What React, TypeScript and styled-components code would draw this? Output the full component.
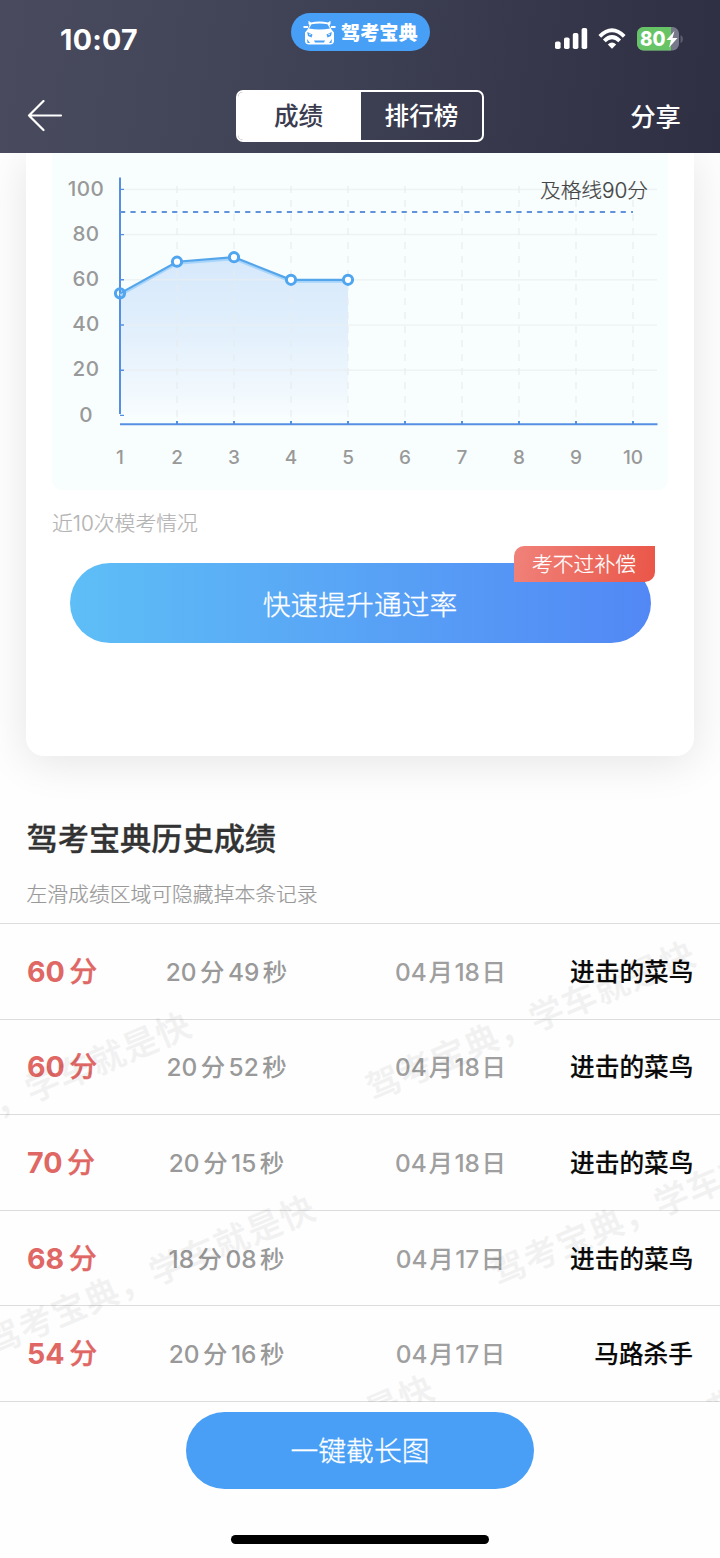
import React from "react";
import styled, { createGlobalStyle } from "styled-components";

const GlobalStyle = createGlobalStyle`
  * { box-sizing: border-box; }
  body {
    margin: 0;
    background: #fefefe;
    font-family: Inter, "Noto Sans CJK SC", sans-serif;
    color: #333;
  }
  button { font: inherit; border: 0; padding: 0; background: none; color: inherit; }
`;

const Screen = styled.div`
  width: 720px;
  height: 1558px;
  display: flex;
  flex-direction: column;
  overflow: hidden;
  background: #fefefe;
`;

const Header = styled.header`
  height: 153px;
  flex: none;
  position: relative;
  z-index: 2;
  color: #fff;
  background: linear-gradient(98deg, #494a5d 0%, #414457 35%, #37384b 70%, #2f2f43 100%);
`;

const StatusBar = styled.div`
  height: 78px;
  padding: 0 36px 0 60px;
  display: grid;
  grid-template-columns: 230.5px 139px 1fr;
  align-items: center;
`;

const Clock = styled.time`
  font-size: 28.6px;
  font-weight: 700;
  line-height: 32px;
  padding-top: 1px;
  letter-spacing: 0.3px;
`;

const BrandPill = styled.div`
  width: 139px;
  height: 38px;
  margin-top: -14px;
  padding: 1px 11px 0 12.5px;
  border-radius: 19px;
  background: #479ff6;
  display: flex;
  align-items: center;
  gap: 5px;
  font-size: 19.2px;
  font-weight: 900;
  line-height: 38px;
  white-space: nowrap;

  svg { flex: none; }
`;

const StatusIcons = styled.div`
  display: flex;
  justify-content: flex-end;
  align-items: center;
`;

const NavBar = styled.nav`
  height: 75px;
  padding: 1px 39px 0 27px;
  display: grid;
  grid-template-columns: 209px 248px 1fr;
  align-items: center;
`;

const BackButton = styled.button`
  width: 52px;
  height: 40px;
  display: flex;
  align-items: center;
`;

const Tabs = styled.div`
  width: 248px;
  height: 52px;
  border: 2px solid #fff;
  border-radius: 7px;
  display: flex;
  overflow: hidden;
`;

const Tab = styled.button<{ $active?: boolean }>`
  flex: 1;
  font-size: 24.6px;
  font-weight: 500;
  line-height: 48px;
  padding-right: ${(p) => (p.$active ? "2px" : "0")};
  color: ${(p) => (p.$active ? "#3b3c50" : "#fff")};
  background: ${(p) => (p.$active ? "#fff" : "transparent")};
`;

const ShareButton = styled.button`
  justify-self: end;
  padding-top: 1px;
  font-size: 25.4px;
  font-weight: 500;
  line-height: 34px;
`;

const Card = styled.section`
  height: 603px;
  flex: none;
  margin: 0 26px;
  padding: 0 26px;
  border-radius: 0 0 18px 18px;
  background: #fff;
  box-shadow: 0 6px 44px rgba(0, 0, 0, 0.105);
`;

const ChartPanel = styled.div`
  height: 337px;
  border-radius: 0 0 10px 10px;
  background: #f8fefe;
  overflow: hidden;

  svg { display: block; }
`;

const ChartCaption = styled.p`
  margin: 18px 0 0;
  font-size: 20.8px;
  font-weight: 300;
  -webkit-text-stroke: 0.2px currentColor;
  line-height: 32px;
  color: #b3b3b3;
`;

const BoostWrap = styled.div`
  position: relative;
  margin: 23px 17px 0 17.5px;
`;

const BoostButton = styled.button`
  display: block;
  width: 581px;
  height: 80px;
  padding-top: 2px;
  border-radius: 40px;
  background: linear-gradient(90deg, #5ebef6, #5288f5);
  color: #fff;
  font-size: 27.8px;
  font-weight: 300;
  -webkit-text-stroke: 0.3px currentColor;
  line-height: 80px;
`;

const Badge = styled.span`
  position: absolute;
  top: -17px;
  right: -3.5px;
  width: 141px;
  height: 36px;
  padding-top: 1px;
  border-radius: 10px 0 10px 0;
  background: linear-gradient(100deg, #f0827a, #ea5648);
  color: #fff;
  font-size: 20.8px;
  font-weight: 300;
  -webkit-text-stroke: 0.25px currentColor;
  line-height: 35px;
  text-align: center;
`;

const HistoryHead = styled.div`
  height: 167px;
  flex: none;
  padding: 60px 26.5px 0;
`;

const HistoryTitle = styled.h2`
  margin: 0;
  font-size: 31.2px;
  font-weight: 500;
  -webkit-text-stroke: 0.3px currentColor;
  line-height: 46px;
  color: #333;
`;

const HistoryHint = styled.p`
  margin: 17px 0 0;
  font-size: 20.8px;
  font-weight: 300;
  -webkit-text-stroke: 0.2px currentColor;
  line-height: 32px;
  color: #999;
`;

const HistoryList = styled.ul`
  position: relative;
  flex: none;
  margin: 0;
  padding: 0;
  list-style: none;
  overflow: hidden;
  border-top: 1px solid #dcdcdc;
`;

const HistoryRow = styled.li`
  height: 95.6px;
  padding: 1px 27px 0;
  display: grid;
  grid-template-columns: 100px 199px 5px 239px 1fr;
  align-items: center;
  border-bottom: 1px solid #dcdcdc;
  white-space: nowrap;
  line-height: 40px;
`;

const Score = styled.span`
  display: flex;
  align-items: center;
  gap: 4.5px;
  font-size: 28.6px;
  font-weight: 700;
  color: #df6764;
`;

const ScoreUnit = styled.span`
  font-weight: 500;
  font-size: 28px;
  -webkit-text-stroke: 0.3px currentColor;
`;

const Duration = styled.span`
  display: flex;
  justify-content: center;
  align-items: center;
  gap: 3.5px;
  font-size: 24.4px;
  font-weight: 500;
  color: #999;
`;

const ExamDate = styled.span`
  grid-column: 4;
  display: flex;
  justify-content: center;
  gap: 1.6px;
  font-size: 24.4px;
  font-weight: 500;
  color: #9f9f9f;
`;

const Rank = styled.span`
  justify-self: end;
  font-size: 24.7px;
  font-weight: 500;
  -webkit-text-stroke: 0.15px currentColor;
  color: #0a0a0a;
`;

const Watermark = styled.span<{ $x: number; $y: number }>`
  position: absolute;
  left: ${(p) => p.$x}px;
  top: ${(p) => p.$y}px;
  transform: translate(-50%, -50%) rotate(-23deg);
  font-size: 34px;
  font-weight: 500;
  -webkit-text-stroke: 0.4px currentColor;
  letter-spacing: 1.4px;
  line-height: 40px;
  white-space: nowrap;
  color: #000;
  opacity: 0.048;
  pointer-events: none;
`;

const Footer = styled.footer`
  flex: 1;
  padding-top: 10px;
  display: flex;
  flex-direction: column;
  align-items: center;
`;

const CaptureButton = styled.button`
  width: 348px;
  height: 77px;
  padding-top: 2px;
  border-radius: 39px;
  background: #499ff6;
  color: #fff;
  font-size: 27.8px;
  font-weight: 300;
  -webkit-text-stroke: 0.3px currentColor;
  line-height: 75px;
`;

const HomeIndicator = styled.div`
  width: 258px;
  height: 9px;
  margin-top: 46px;
  border-radius: 5px;
  background: #000;
`;

const CarIcon = () => (
  <svg width="33" height="25" viewBox="0 0 33 25" fill="none">
    <path d="M5.500 0.800 8 2.400Q16.500 .6 25 2.400L27.500.800V4L26.500 5.500 28.500 9.500 31 12.500V21.500Q30.500 24.500 27 24.500H6Q2.500 24.500 2 21.500V12.500L4.500 9.500 6.500 5.500 5.500 4Z" fill="#fff" />
    <path d="M.5 7H5M28 7H32.500" stroke="#fff" strokeWidth="1.800" />
    <path d="M8.500 4.300Q16.500 2.500 24.500 4.300L27 8.500Q22 9.500 16.500 9.500T6 8.500Z" fill="#479ff6" />
    <path d="M4.200 12 9.500 14.500 8.500 17.500 5 16ZM28.800 12 23.500 14.500 24.500 17.500 28 16ZM11 20.500H22L21 22.500H12ZM4 19 7 23H4.500ZM29 19 26 23H28.500Z" fill="#479ff6" />
    <path d="M6.300 14.300H7.600M25.400 14.300H26.700" stroke="#fff" strokeWidth="1.200" />
  </svg>
);

const SignalIcon = () => (
  <svg width="33" height="22" viewBox="0 0 33 22" fill="#fff">
    <rect x="0" y="13.500" width="5.600" height="7.500" rx="1.800" />
    <rect x="9" y="9.500" width="5.600" height="11.500" rx="1.800" />
    <rect x="17.800" y="5" width="5.600" height="16" rx="1.800" />
    <rect x="26.600" y="0" width="5.600" height="21" rx="1.800" />
  </svg>
);

const WifiIcon = () => (
  <svg width="28" height="22" viewBox="0 0 28 22" fill="none" stroke="#fff" strokeWidth="3.900">
    <path d="M1.800 8.300Q14-3.700 26.200 8.300" />
    <path d="M6.300 12.900Q14 5.300 21.700 12.900" />
    <path d="M14 20.800 9.800 16.500Q14 12.500 18.200 16.500Z" fill="#fff" stroke="none" />
  </svg>
);

const BatteryIcon = () => (
  <svg width="47" height="24" viewBox="0 0 47 24">
    <defs>
      <clipPath id="batteryBody"><rect width="42" height="23.500" rx="6.500" /></clipPath>
    </defs>
    <g clipPath="url(#batteryBody)">
      <rect width="42" height="24" fill="#77788a" />
      <rect width="34" height="24" fill="#66c466" />
    </g>
    <path d="M43.500 8Q46 9 46 12T43.500 16Z" fill="#5c5d6f" />
    <text x="3" y="19" fontFamily="Inter" fontSize="20.500" fontWeight="800" fill="#fff" textLength="25.5" lengthAdjust="spacingAndGlyphs">80</text>
    <path d="M37.500 4 29.500 13H34L32 20.500 40.500 11H35.500Z" fill="#fff" />
  </svg>
);

const StatusSpacer = styled.span<{ $w: number }>`
  width: ${(p) => p.$w}px;
`;

const BackIcon = () => (
  <svg width="36" height="32" viewBox="0 0 36 32" fill="none" stroke="#fff" strokeWidth="2.200" strokeLinecap="round" strokeLinejoin="round">
    <path d="M34 15.500H2M16.500 1 2 15.500 16.500 30" />
  </svg>
);

const attempts = [54, 68, 70, 60, 60];
const xAt = (n: number) => 120 + (n - 1) * 57;
const yAt = (score: number) => 415.4 - score * 2.26;
const linePoints = attempts.map((s, i) => `${xAt(i + 1)},${yAt(s)}`).join(" ");
const runs = Array.from({ length: 10 }, (_, i) => i + 1);
const levels = [100, 80, 60, 40, 20, 0];

const ScoreChart = () => (
  <svg width="616" height="337" viewBox="52 153 616 337" fontFamily="Inter, 'Noto Sans CJK SC', sans-serif">
    <defs>
      <linearGradient id="area" x1="0" y1="0" x2="0" y2="1">
        <stop offset="0" stopColor="#d5e8fb" />
        <stop offset="0.5" stopColor="#e3f0fc" />
        <stop offset="1" stopColor="#f7fcfe" />
      </linearGradient>
    </defs>
    <polygon points={`120,415 ${linePoints} 348,415`} fill="url(#area)" />
    {levels.slice(0, 5).map((v) => (
      <line key={v} x1="120" x2="657" y1={yAt(v)} y2={yAt(v)} stroke="#e9eeef" strokeOpacity=".7" strokeWidth="1.500" />
    ))}
    {runs.slice(1).map((n) => (
      <line key={n} x1={xAt(n)} x2={xAt(n)} y1="186" y2="421" stroke="#e6ebed" strokeOpacity=".75" strokeWidth="1.500" strokeDasharray="7 7" />
    ))}
    <g stroke="#568fe2" strokeWidth="2">
      <line x1="120" x2="120" y1="177.500" y2="414" />
      <line x1="120" x2="657.500" y1="424.300" y2="424.300" />
      {levels.map((v) => (
        <line key={v} x1="120" x2="124" y1={yAt(v)} y2={yAt(v)} strokeWidth="1.400" />
      ))}
      {runs.slice(1).map((n) => (
        <line key={n} x1={xAt(n)} x2={xAt(n)} y1="421" y2="425" />
      ))}
      <line x1="120" x2="633" y1="212" y2="212" stroke="#6093dc" strokeDasharray="5.200 5.230" />
    </g>
    <polyline points={linePoints} transform="translate(0 1.5)" fill="none" stroke="#a7d4fa" strokeWidth="3" />
    <polyline points={linePoints} fill="none" stroke="#55a5ea" strokeWidth="2.200" />
    {attempts.map((s, i) => (
      <circle key={i} cx={xAt(i + 1)} cy={yAt(s)} r="4.600" fill={i === 0 ? "none" : "#fff"} stroke="#4fa5ef" strokeWidth="3" />
    ))}
    <g fill="#999" fontSize="20.600" fontWeight="500" letterSpacing=".4" textAnchor="middle">
      {levels.map((v) => (
        <text key={v} x="86" y={yAt(v) + 6.2}>{v}</text>
      ))}
    </g>
    <g fill="#999" fontSize="19" fontWeight="500" textAnchor="middle">
      {runs.map((n) => (
        <text key={n} x={xAt(n)} y="464">{n}</text>
      ))}
    </g>
    <text x="540" y="198" fontSize="20.800" fontWeight="300" fill="#444" stroke="#444" strokeWidth=".2" textLength="108">及格线90分</text>
  </svg>
);

const records = [
  { score: 60, min: "20", sec: "49", month: "04", day: "18", rank: "进击的菜鸟" },
  { score: 60, min: "20", sec: "52", month: "04", day: "18", rank: "进击的菜鸟" },
  { score: 70, min: "20", sec: "15", month: "04", day: "18", rank: "进击的菜鸟" },
  { score: 68, min: "18", sec: "08", month: "04", day: "17", rank: "进击的菜鸟" },
  { score: 54, min: "20", sec: "16", month: "04", day: "17", rank: "马路杀手" },
];

const watermarks = [
  [531, 97],
  [27, 168],
  [656, 282],
  [151, 351],
  [772, 462],
  [270, 531],
];

export default function App() {
  return (
    <>
      <GlobalStyle />
      <Screen>
        <Header>
          <StatusBar>
            <Clock>10:07</Clock>
            <BrandPill>
              <CarIcon />
              驾考宝典
            </BrandPill>
            <StatusIcons>
              <SignalIcon />
              <StatusSpacer $w={10} />
              <WifiIcon />
              <StatusSpacer $w={11} />
              <BatteryIcon />
            </StatusIcons>
          </StatusBar>
          <NavBar>
            <BackButton aria-label="返回"><BackIcon /></BackButton>
            <Tabs>
              <Tab $active>成绩</Tab>
              <Tab>排行榜</Tab>
            </Tabs>
            <ShareButton>分享</ShareButton>
          </NavBar>
        </Header>

        <Card>
          <ChartPanel><ScoreChart /></ChartPanel>
          <ChartCaption>近10次模考情况</ChartCaption>
          <BoostWrap>
            <BoostButton>快速提升通过率</BoostButton>
            <Badge>考不过补偿</Badge>
          </BoostWrap>
        </Card>

        <HistoryHead>
          <HistoryTitle>驾考宝典历史成绩</HistoryTitle>
          <HistoryHint>左滑成绩区域可隐藏掉本条记录</HistoryHint>
        </HistoryHead>

        <HistoryList>
          {records.map((r, i) => (
            <HistoryRow key={i}>
              <Score>{r.score}<ScoreUnit>分</ScoreUnit></Score>
              <Duration>
                <span>{r.min}</span><span>分</span><span>{r.sec}</span><span>秒</span>
              </Duration>
              <ExamDate>
                <span>{r.month}</span><span>月</span><span>{r.day}</span><span>日</span>
              </ExamDate>
              <Rank>{r.rank}</Rank>
            </HistoryRow>
          ))}
          {watermarks.map(([x, y]) => (
            <Watermark key={`${x}-${y}`} $x={x} $y={y} aria-hidden>驾考宝典，学车就是快</Watermark>
          ))}
        </HistoryList>

        <Footer>
          <CaptureButton>一键截长图</CaptureButton>
          <HomeIndicator />
        </Footer>
      </Screen>
    </>
  );
}
